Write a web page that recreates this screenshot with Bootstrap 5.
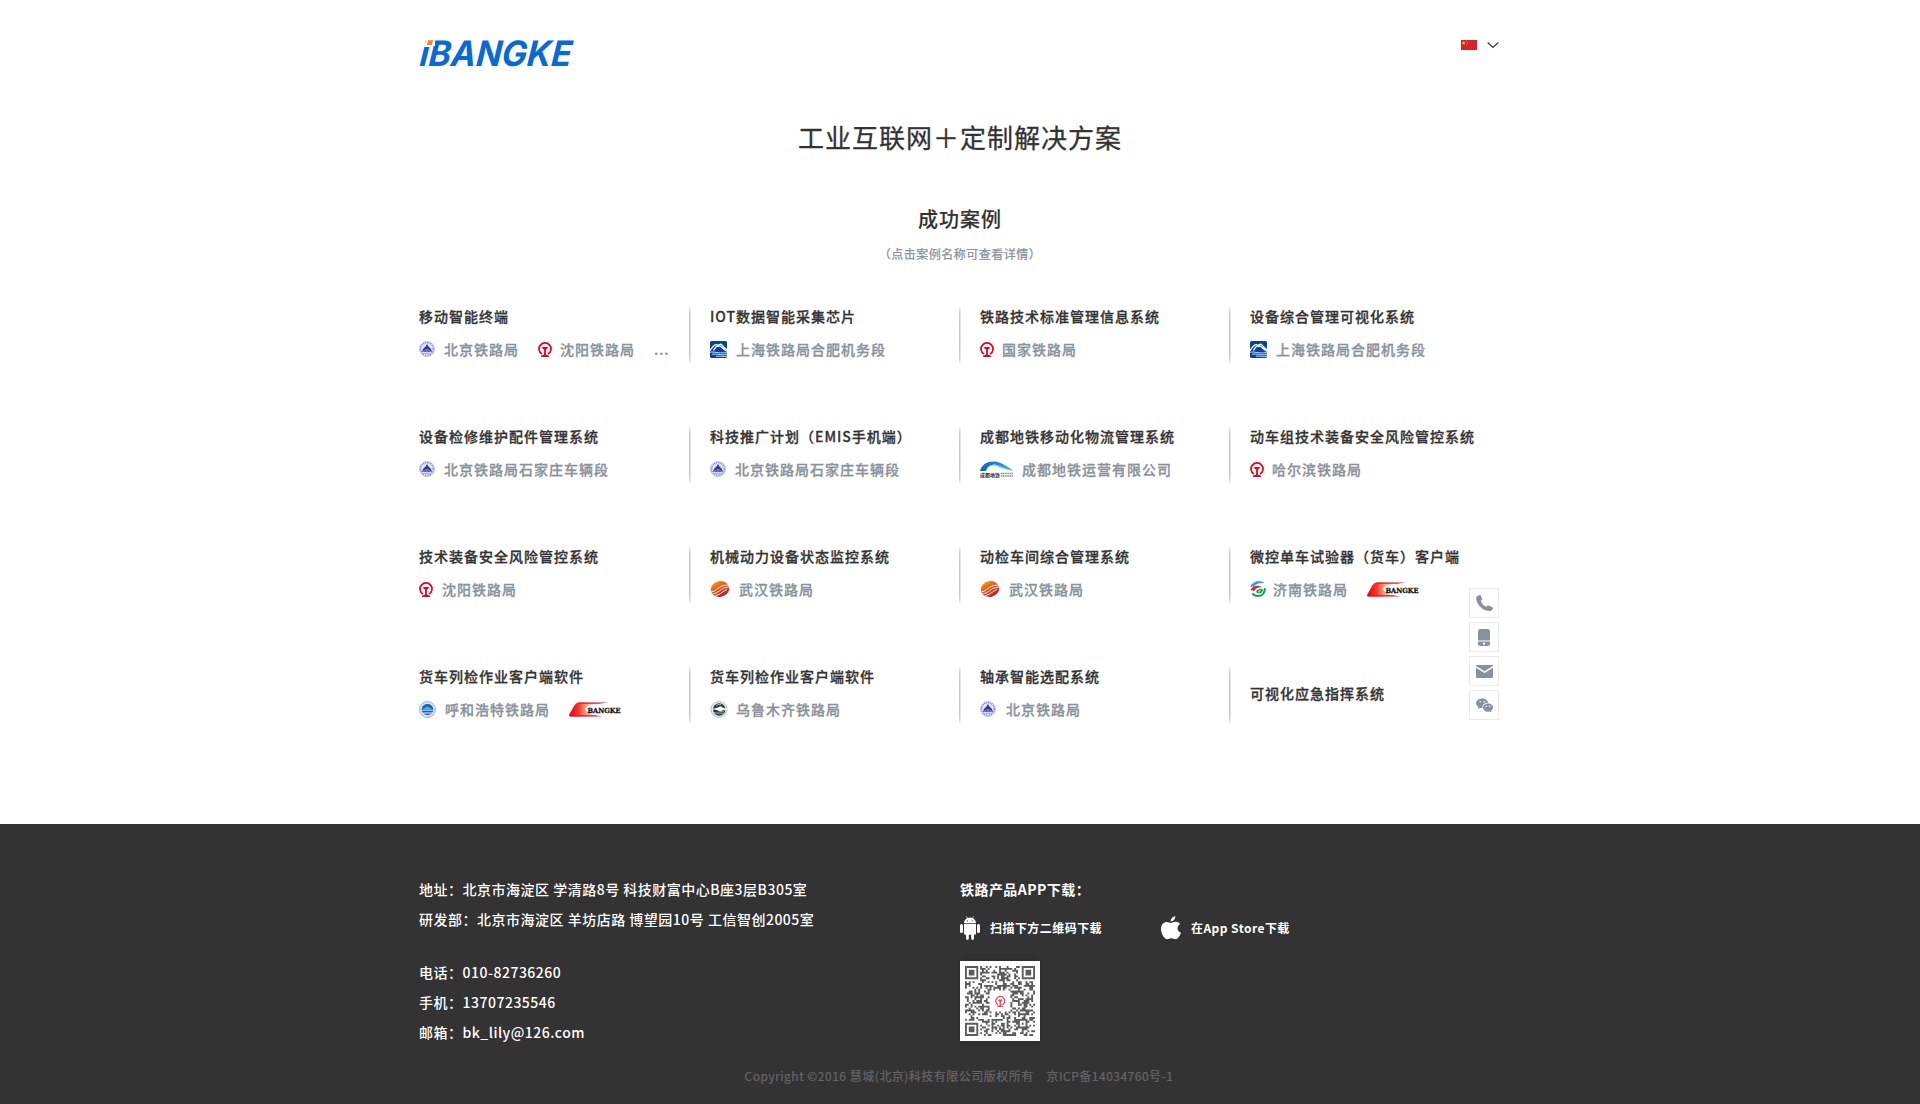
<!DOCTYPE html>
<html lang="zh-CN">
<head>
<meta charset="utf-8">
<meta name="viewport" content="width=device-width, initial-scale=1">
<title>iBANGKE</title>
<link href="https://cdn.jsdelivr.net/npm/bootstrap@5.3.0/dist/css/bootstrap.min.css" rel="stylesheet">
<style>
body{font-family:"Noto Sans CJK SC","Noto Sans",sans-serif;color:#333;background:#fff;overflow-x:hidden}
.wrap{width:1082px;margin:0 auto}
.topbar{height:104px;padding:39px 2px 0 0}
.brand-mark{overflow:visible}
.lang{padding-top:1px}
.chev{margin-left:10px}
.page-title{font-size:26px;letter-spacing:1px;line-height:40px;margin:13px 0 0;font-weight:400;-webkit-text-stroke:.3px #333}
.sub-title{font-size:20px;letter-spacing:1px;line-height:30px;margin:47px 0 0;font-weight:500;-webkit-text-stroke:.15px #333}
.hint{font-size:12px;letter-spacing:.5px;line-height:20px;color:#8a929a;margin:10px 0 41px;font-weight:400;-webkit-text-stroke:.25px #8a929a}
.cases{row-gap:60px}
.case-cell{height:60px;width:270px;padding-left:21px;white-space:nowrap;background:linear-gradient(#fff,#ccc 12%,#c4c4c4 50%,#ccc 88%,#fff) 0 0/1.5px 100% no-repeat}
.case-cell.first{padding-left:0;background:none}
.case-name{font-size:14px;letter-spacing:1px;line-height:22px;font-weight:500;margin:0 0 10px;color:#333;-webkit-text-stroke:.3px #333}
.case-by{font-size:14px;letter-spacing:1px;line-height:24px;font-weight:500;color:#8a929a;-webkit-text-stroke:.3px #8a929a}
.case-by svg{display:block;flex:none;-webkit-text-stroke:0}
.next{margin-left:19px}
.dock{right:calc(50% - 539px);top:588px;gap:4px}
.dock a{width:30px;height:30px;border:1px solid #ececec;background:#fff}
.foot{background:#333;color:#fff;height:280px;margin-top:99px}
.foot-left{width:541px;font-size:14px;letter-spacing:.5px;line-height:30px;font-weight:500;padding-top:50px}
.foot-left p{margin:0}
.foot-left p.apart{margin-top:23px}
.foot-right{padding-top:55px;font-weight:700;letter-spacing:.45px}
.app-title{font-size:14px;line-height:20px;margin:0}
.app-row{font-size:12px;line-height:24px;margin:17px 0 21px}
.app-row span{margin-left:10px}
.app-one{width:201px}
.copy{font-size:12px;letter-spacing:.5px;color:#666;line-height:20px;margin:19px 2px 0 0;-webkit-text-stroke:.2px #666}
.qrbox{display:block;box-shadow:0 0 8px rgba(0,0,0,.18)}
</style>
<script src="https://cdn.jsdelivr.net/npm/bootstrap@5.3.0/dist/js/bootstrap.bundle.min.js"></script>
</head>
<body>
<svg width="0" height="0" class="position-absolute" aria-hidden="true">
<defs>
<linearGradient id="gOrange" x1="0" y1="0" x2=".4" y2="1"><stop offset="0" stop-color="#f6b21c"/><stop offset=".4" stop-color="#e56a20"/><stop offset="1" stop-color="#c41f22"/></linearGradient>
<linearGradient id="gRed"><stop offset="0" stop-color="#e60012"/><stop offset=".25" stop-color="#ee3a2a"/><stop offset=".5" stop-color="#f9b79c"/><stop offset=".75" stop-color="#fff"/></linearGradient>
<linearGradient id="gBlue"><stop offset="0" stop-color="#0a67b4"/><stop offset="1" stop-color="#2ea7e0"/></linearGradient>
<symbol id="beijing" viewBox="0 0 16 16"><circle cx="8" cy="8" r="7.600" fill="#f4f4fb" stroke="#b0b0dc" stroke-width=".7"/><circle cx="8" cy="8" r="6.300" fill="none" stroke="#7f7fc4" stroke-width="1.600" stroke-dasharray="1 .8"/><circle cx="8" cy="8" r="5" fill="#e0e0f2"/><path d="M8 3l1.600 2.700 1.800 1.500 1.800 3.600H2.800l1.800-3.600 1.800-1.500z" fill="#34349c"/><path d="M3.500 10.800L8 8.200l4.500 2.600M8 8v3" stroke="#a9a9dc" stroke-width=".7" fill="none"/><path d="M4.500 12.300h7" stroke="#8686c8" stroke-width=".7"/></symbol>
<symbol id="rail" viewBox="0 0 14 16"><path d="M3.900 13.100A6 6 0 1 1 10.100 13.100" fill="none" stroke="#e60019" stroke-width="1.700"/><path d="M4.300 6h5.400v1.500L7.900 8.500V13.800l3 .8V16H3.100v-1.400l3-.8V8.500L4.300 7.500z" fill="#e60019"/></symbol>
<symbol id="hefei" viewBox="0 0 17 17"><rect width="17" height="17" rx="1.500" fill="#0b419b"/><path d="M0 9.700C2 6.500 3.500 4 6 3.600c1.600-.2 2 .8 3 2.200M3.500 9.500C5 6.500 7 4.800 8.500 4.600c2.500-.3 4 3.400 8.500 5.800M7.500 5.400C9 3 11 2.400 12.500 4.600c1 1.400 2.300 3 4.500 4" fill="none" stroke="#fff" stroke-width="1.300"/><path d="M0 11.300c4-1 7 1.200 17 .4M2 13.300c5-.9 8 1 15 .2M6 15.300c4-.5 7 .5 11 0" fill="none" stroke="#dfe8f6" stroke-width=".9"/></symbol>
<symbol id="metro" viewBox="0 0 34 17"><path d="M0 10C2 3 8 0 15 .6c7 .6 12 5.400 18.500 9C25 8 20 4.500 14 4.300 9 4.200 7.500 6 6 10z" fill="url(#gBlue)"/><path d="M14 4.300c5 1 7 4.700 19.500 5.300C26 8.500 20 3 12 3z" fill="#7fc8ee"/><text x="0" y="16" font-size="5" font-weight="700" fill="#333" textLength="20" lengthAdjust="spacingAndGlyphs" letter-spacing="0">成都地铁</text><path d="M21 12.500h12.500M21 15h12.500" stroke="#8a8a8a" stroke-width="1.300" stroke-dasharray="1.300 .5"/></symbol>
<symbol id="wuhan" viewBox="0 0 20 16"><ellipse cx="10" cy="8" rx="9.300" ry="7.900" transform="rotate(-12 10 8)" fill="url(#gOrange)"/><path d="M1 11C6 10.500 8 6.500 12 5c3-1 5-.8 7-1M2.500 12.800C9 12 10 8.500 14 7c2-.8 4-.9 5.500-1M5.500 14.500C11 13.500 12 10.500 17 8.500" fill="none" stroke="#fff" stroke-width=".9"/></symbol>
<symbol id="jinan" viewBox="0 0 16 16"><path d="M.5 5.600C2.500.8 9-1.200 13.800 1.800 9 1.400 5.500 2.600 3.200 5.800 2.400 5.400 1.500 5.300.5 5.600z" fill="#1c9fe4" stroke="#1c9fe4" stroke-width=".5"/><path d="M.5 9.200C2 4.800 8 3.200 12 6.200 8 5.800 5.500 7 4 10.300 3 9.300 2 9 .5 9.200z" fill="#e6212a"/><path d="M14.800 7.200c.4 4.500-2.800 7.800-6.800 7.800-2.700 0-4.500-1-5.700-2.600" fill="none" stroke="#14a152" stroke-width="1.900"/><path d="M12.500 8.500C7.500 8.300 5.500 11.200 8 11.600c2.500.2 4-1.200 4.500-3.100" fill="none" stroke="#14a152" stroke-width="1.500"/></symbol>
<symbol id="huhe" viewBox="0 0 17 17"><circle cx="8.500" cy="8.500" r="8" fill="#edf3f9" stroke="#8fadcc" stroke-width=".9"/><circle cx="8.500" cy="8.500" r="6.800" fill="none" stroke="#9ab2cd" stroke-width=".8" stroke-dasharray=".8 .8"/><circle cx="8.500" cy="8.500" r="5.800" fill="#1e63b5"/><path d="M3.500 8.700c2-1 2.500-2.700 5-2.900 2.500.2 3 1.900 5 2.900z" fill="#4bb5d7"/><path d="M4 12h9" stroke="#fff" stroke-width=".9"/><path d="M3 9.400h11" stroke="#bfe0ee" stroke-width=".8"/></symbol>
<symbol id="wulu" viewBox="0 0 19 17"><circle cx="9" cy="8.500" r="7.900" fill="#e9ecec" stroke="#8f9b9a" stroke-width=".9" stroke-dasharray="1.500 .5"/><circle cx="9.200" cy="8.500" r="6.200" fill="#24403d"/><path d="M3 7.600c3 .3 4.500-1.600 8-2.300 1 1.300 3.300 2.200 8 3.400l-8 .3c2 .7 3 .8 5 .8-4 1-7 .8-8.500-.6C6 8.700 4.500 8.500 3 8.700z" fill="#fff"/><path d="M4 11.500c3 1.200 5 .2 9.500.8M6 4.500c2-1.200 3.500-1.200 5-.8" stroke="#cbd6d4" fill="none" stroke-width=".8"/></symbol>
<symbol id="bangke" viewBox="0 0 52 15"><path d="M.3 12.600L5 4C6.500 1.500 8 .5 11 .5h27C30 1.700 18 2.600 16.500 6.200 15.500 10.500 24 12.500 33 14.500H1.500C.2 14.500-.3 13.800.3 12.600z" fill="url(#gRed)"/><path d="M9 .5h30l-9 1.200H10zM1 14.500h32l-7-1.300H3z" fill="#e5141a"/><text x="18.500" y="10.900" font-family="DejaVu Serif" font-size="7" font-weight="700" fill="#111" stroke="#111" stroke-width=".3" textLength="33" lengthAdjust="spacingAndGlyphs" letter-spacing="0">BANGKE</text></symbol>
</defs>
</svg>

<header class="wrap topbar d-flex justify-content-between">
  <a href="#" aria-label="iBANGKE"><svg width="156" height="29" viewBox="0 0 156 29" class="brand-mark d-block"><g transform="translate(0 27) skewX(-5)"><text x="0" y="0" font-family="Inter" font-size="35" font-weight="700" font-style="italic" fill="#0b69d3" textLength="152" lengthAdjust="spacingAndGlyphs">iBANGKE</text></g><path d="M7 -1h9v8H6z" fill="#fff"/><path d="M9.200 1.200h5L12.800 6H7.700z" fill="#f5832a"/></svg></a>
  <div class="lang d-flex align-items-start">
    <svg width="16" height="10" viewBox="0 0 16 10"><rect width="16" height="10" fill="#d5222a"/><path d="M2.700 1.100l.5 1.400h1.500l-1.200.9.400 1.400-1.200-.8-1.200.8.400-1.400-1.200-.9h1.500z" fill="#ffd83a"/><path d="M5.200.6h.9v.8h-.9zM6.200 1.900h.8v.8h-.8zM6.200 3.400h.8v.8h-.8zM5.200 4.700h.8v.8h-.8z" fill="#f0a02c"/></svg>
    <svg class="chev" width="12" height="10" viewBox="0 0 12 10"><path d="M.7 2.500L6 7.500l5.300-5" fill="none" stroke="#333" stroke-width="1.100"/></svg>
  </div>
</header>

<main>
  <h1 class="page-title text-center">工业互联网＋定制解决方案</h1>
  <h2 class="sub-title text-center">成功案例</h2>
  <p class="hint text-center">（点击案例名称可查看详情）</p>
  <div class="wrap cases d-flex flex-wrap" id="cases"></div>
</main>

<nav class="dock position-absolute d-flex flex-column">
  <a href="#" class="d-flex align-items-center justify-content-center" aria-label="phone"><svg width="17" height="17" viewBox="0 0 17 17"><path d="M1.500.9L3.700.1c.6-.1 1 .1 1.200.6L6 3.700c.2.600 0 1-.3 1.300L4.800 6c1 2.600 2.800 4.500 5.200 5.800l1.300-1c.4-.3.900-.4 1.400-.2l3.600 1.600c.5.300.7.700.6 1.200-.4 1.600-1.700 2.700-3.500 2.700C7 16 .6 9.500.1 3.700.1 2.300.6 1.400 1.500.9z" fill="#89929b"/></svg></a>
  <a href="#" class="d-flex align-items-center justify-content-center" aria-label="mobile"><svg width="12" height="17" viewBox="0 0 12 17"><path d="M2.500 0h7Q12 0 12 2.500V11.500H0V2.500Q0 0 2.500 0zM0 12.500h12v2Q12 17 9.500 17h-7Q0 17 0 14.500z" fill="#89929b"/><circle cx="6" cy="14.600" r="1.200" fill="#fff"/></svg></a>
  <a href="#" class="d-flex align-items-center justify-content-center" aria-label="mail"><svg width="17" height="13" viewBox="0 0 17 13"><path d="M1 0h15q1 0 1 1L8.500 6.200 0 1Q0 0 1 0zM0 2.700l8.500 5.200L17 2.700V12q0 1-1 1H1q-1 0-1-1z" fill="#89929b"/></svg></a>
  <a href="#" class="d-flex align-items-center justify-content-center" aria-label="wechat"><svg width="17" height="15" viewBox="0 0 17 15"><path d="M6.200.4c3.200 0 5.700 1.900 6 4.300C8.500 4.600 6 6.900 6.300 10.100c-.8 0-1.500 0-2.200-.2L2 11.200l.5-2C-2.300 6 .5.400 6.200.4z" fill="#89929b"/><path d="M12 5.400c2.800 0 5 1.800 5 4.200 0 1.300-.7 2.400-1.800 3.200l.3 1.700-1.800-.9C10 14.600 7 12.500 7 9.600c0-2.400 2.200-4.200 5-4.200z" fill="#89929b"/><g fill="#fff"><circle cx="4.300" cy="3.700" r=".8"/><circle cx="8.200" cy="3.700" r=".8"/><circle cx="10.300" cy="8.300" r=".7"/><circle cx="13.600" cy="8.300" r=".7"/></g></svg></a>
</nav>

<footer class="foot">
  <div class="wrap d-flex">
    <div class="foot-left">
      <p>地址：北京市海淀区 学清路8号 科技财富中心B座3层B305室</p>
      <p>研发部：北京市海淀区 羊坊店路 博望园10号 工信智创2005室</p>
      <p class="apart">电话：010-82736260</p>
      <p>手机：13707235546</p>
      <p>邮箱：bk_lily@126.com</p>
    </div>
    <div class="foot-right">
      <p class="app-title">铁路产品APP下载：</p>
      <div class="app-row d-flex">
        <div class="app-one d-flex align-items-center">
          <svg width="20" height="24" viewBox="0 0 20 24" fill="#fff"><path d="M4 7.200C4.200 4.600 5.600 3 7.300 2.100L6 .4l.4-.3L7.800 2a6 6 0 0 1 4.400 0L13.600.1l.4.300-1.300 1.700C14.400 3 15.800 4.600 16 7.200zM4 8h12v9.500q0 1.300-1.300 1.300H14v3.700a1.400 1.400 0 0 1-2.800 0v-3.700H8.800v3.700a1.400 1.400 0 0 1-2.800 0v-3.700h-.7Q4 18.800 4 17.500z"/><rect y="8" width="3" height="9" rx="1.500"/><rect x="17" y="8" width="3" height="9" rx="1.500"/><g fill="#333"><circle cx="7.300" cy="4.800" r=".6"/><circle cx="12.700" cy="4.800" r=".6"/></g></svg>
          <span>扫描下方二维码下载</span>
        </div>
        <div class="d-flex align-items-center">
          <svg width="20" height="24" viewBox="0 0 20 24" fill="#fff"><path d="M14.300.2c.2 2.600-2 5.200-4.500 5.200C9.500 3 11.800.5 14.300.2zM10.200 6.900c1 0 2.300-1.200 4.400-1.200 1.800 0 3.400.8 4.500 2.300-3.800 2.400-3.200 7.200.9 8.800-1 2.800-3.200 6.400-5.300 6.400-1.700 0-2.400-1-4.300-1s-2.600 1-4.200 1C3.500 23.200 0 17.800 0 13c0-4.600 2.900-7.100 5.700-7.100 1.900 0 3.400 1 4.500 1z"/></svg>
          <span>在App Store下载</span>
        </div>
      </div>
      <svg class="qrbox" id="qr" width="80" height="80" viewBox="0 0 80 80"></svg>
    </div>
  </div>
  <p class="copy text-center">Copyright ©2016 慧城(北京)科技有限公司版权所有 &nbsp;&nbsp; 京ICP备14034760号-1</p>
</footer>

<script>
// Each case: title, then [logo, client, text gap] entries
const size={beijing:[16,16],rail:[14,16],hefei:[17,17],metro:[34,17],wuhan:[20,16],jinan:[16,16],huhe:[17,17],wulu:[19,17],bangke:[52,15]};
const cases=[
["移动智能终端",["beijing","北京铁路局",9],["rail","沈阳铁路局",8],["","...",0]],
["IOT数据智能采集芯片",["hefei","上海铁路局合肥机务段",9]],
["铁路技术标准管理信息系统",["rail","国家铁路局",8]],
["设备综合管理可视化系统",["hefei","上海铁路局合肥机务段",9]],
["设备检修维护配件管理系统",["beijing","北京铁路局石家庄车辆段",9]],
["科技推广计划（EMIS手机端）",["beijing","北京铁路局石家庄车辆段",9]],
["成都地铁移动化物流管理系统",["metro","成都地铁运营有限公司",8]],
["动车组技术装备安全风险管控系统",["rail","哈尔滨铁路局",8]],
["技术装备安全风险管控系统",["rail","沈阳铁路局",9]],
["机械动力设备状态监控系统",["wuhan","武汉铁路局",9]],
["动检车间综合管理系统",["wuhan","武汉铁路局",9]],
["微控单车试验器（货车）客户端",["jinan","济南铁路局",7],["bangke","",0]],
["货车列检作业客户端软件",["huhe","呼和浩特铁路局",9],["bangke","",0]],
["货车列检作业客户端软件",["wulu","乌鲁木齐铁路局",7]],
["轴承智能选配系统",["beijing","北京铁路局",10]],
["可视化应急指挥系统"]];
document.getElementById("cases").innerHTML=cases.map((c,i)=>{
  const by=c.slice(1).map((b,j)=>{
    const s=size[b[0]];
    return `<div class="d-flex align-items-center${j?' next':''}">${s?`<svg width="${s[0]}" height="${s[1]}"><use href="#${b[0]}"/></svg>`:''}${b[1]?`<span style="margin-left:${b[2]}px">${b[1]}</span>`:''}</div>`;
  }).join("");
  return `<div class="case-cell${i%4?'':' first'}${by?'':' d-flex align-items-center'}"><h3 class="case-name${by?'':' mb-1'}">${c[0]}</h3>${by?`<div class="case-by d-flex">${by}</div>`:''}</div>`;
}).join("");

// Code pattern: 37x37 modules, finder squares in three corners
const n=37,m=70/n;let seed=11,d="";
const rnd=()=>(seed=(seed*1103515245+12345)%2147483648)/2147483648;
for(let y=0;y<n;y++)for(let x=0;x<n;x++){
  let on=rnd()<.5;
  for(const [cx,cy] of [[3,3],[33,3],[3,33]]){const k=Math.max(Math.abs(x-cx),Math.abs(y-cy));if(k<=4)on=k<2||k===3;}
  const a=Math.max(Math.abs(x-30),Math.abs(y-30));if(a<=2)on=a!==1;
  if(Math.max(Math.abs(x-18),Math.abs(y-18))<=5)on=false;
  if(on)d+=`M${(5+x*m).toFixed(2)} ${(5+y*m).toFixed(2)}h${m.toFixed(2)}v${m.toFixed(2)}h-${m.toFixed(2)}z`;
}
document.getElementById("qr").innerHTML=`<rect width="80" height="80" fill="#fff"/><path d="${d}" fill="#5c5c5c"/><use href="#rail" x="35" y="34" width="10.500" height="12" opacity=".72"/>`;
</script>
</body>
</html>
